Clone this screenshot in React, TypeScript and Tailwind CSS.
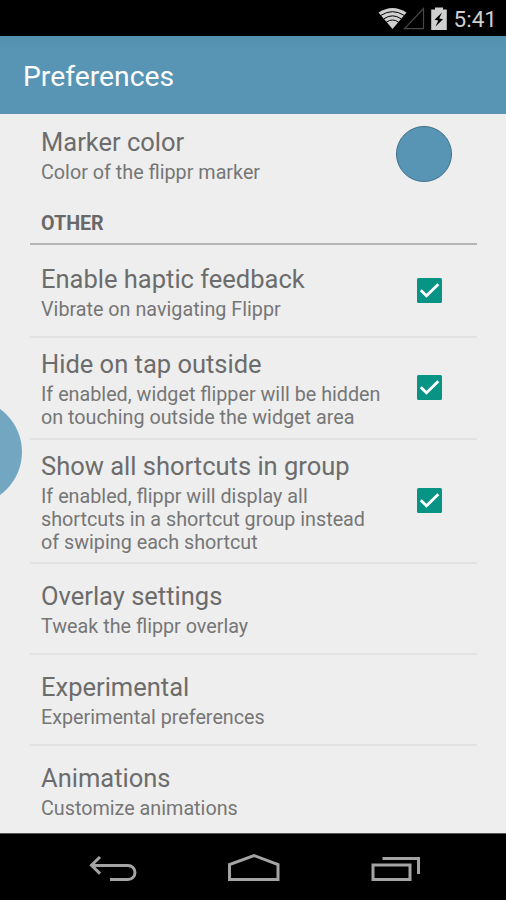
import clsx from "clsx";

type Pref = {
  title: string;
  summary: string[];
  checked?: boolean;
  size: string;
};

const PREFS: Pref[] = [
  { title: "Enable haptic feedback", summary: ["Vibrate on navigating Flippr"], checked: true, size: "h-[93px] pt-[20px]" },
  {
    title: "Hide on tap outside",
    summary: ["If enabled, widget flipper will be hidden", "on touching outside the widget area"],
    checked: true,
    size: "h-[102px] pt-[12px]",
  },
  {
    title: "Show all shortcuts in group",
    summary: ["If enabled, flippr will display all", "shortcuts in a shortcut group instead", "of swiping each shortcut"],
    checked: true,
    size: "h-[124px] pt-[12px]",
  },
  { title: "Overlay settings", summary: ["Tweak the flippr overlay"], size: "h-[91px] pt-[18px]" },
  { title: "Experimental", summary: ["Experimental preferences"], size: "h-[91px] pt-[18px]" },
  { title: "Animations", summary: ["Customize animations"], size: "h-[87px] pt-[18px]" },
];

function StatusBar() {
  return (
    <div className="flex h-9 shrink-0 items-center justify-end bg-black pr-[9px] text-[#cfcfcf]">
      <svg className="h-9 w-[76px]" viewBox="0 0 76 36">
        {/* wifi */}
        <path d="M2.500 12.500Q16.500 3.500 30.500 12.500L16.500 29Z" fill="#cfcfcf" />
        <g fill="none" stroke="#000" strokeWidth="1">
          <path d="M5 15.300Q16.500 8 28 15.300" />
          <path d="M8 18.700Q16.500 13 25 18.700" />
          <path d="M10.500 22Q16.500 18 22.500 22" />
        </g>
        {/* no signal */}
        <path d="M47.500 8.500V28.700H28.500Z" fill="none" stroke="#484848" strokeWidth="1.200" />
        {/* charging battery */}
        <path d="M59 7.500H67V9.500H70.800V30H55.200V9.500H59Z" fill="#cfcfcf" />
        <path d="M66 12.500L58.500 19.800L62.300 20.500L59.500 26.500L67 19.200L63.200 18.500Z" fill="#000" />
      </svg>
      <span className="pl-[2px] pt-[2px] text-[22.500px] leading-9">5:41</span>
    </div>
  );
}

function Labels({ title, summary }: { title: string; summary: string[] }) {
  return (
    <div className="flex-1 text-[#6c6c6c]">
      <div className="text-[25.500px] leading-[28px] whitespace-nowrap">{title}</div>
      <div className="mt-[5px] text-[19.750px] leading-[23px] whitespace-nowrap text-[#767676]">
        {summary.map((line) => (
          <div key={line}>{line}</div>
        ))}
      </div>
    </div>
  );
}

function Check() {
  return (
    <svg className="mr-[35px] h-[25px] w-[25px] self-center" viewBox="0 0 25 25">
      <rect width="25" height="25" rx="1.500" fill="#079485" />
      <path d="M3.800 12.300L9.500 17.800L21.300 6.300" fill="none" stroke="#fff" strokeWidth="2.800" />
    </svg>
  );
}

function NavBar() {
  return (
    <div className="flex h-[67px] shrink-0 justify-center border-t border-[#555] bg-black">
      <svg className="h-[66px] w-[506px]" viewBox="0 834 506 66" fill="none" stroke="#a4a4a4" strokeWidth="3">
        {/* back */}
        <path d="M100 857L91.500 865.300L100 873.600M92 865.500H128A6.800 6.800 0 0 1 128 879.500H110" />
        {/* home */}
        <path d="M229.500 879.500V864.500L254 855.500L278 864.500V879.500Z" />
        {/* recents */}
        <path d="M373 865H410V879.500H373ZM382.500 858.500H418.500V874" />
      </svg>
    </div>
  );
}

export default function App() {
  return (
    <div className="relative flex h-[900px] w-[506px] flex-col overflow-hidden bg-[#eeeeee] font-[Roboto,sans-serif]">
      <StatusBar />
      <header className="flex h-[78px] shrink-0 items-center bg-linear-to-b from-[#5490af] to-[#5895b4] to-20% pl-[23px] pt-[5px] text-[28.300px] text-white">
        Preferences
      </header>

      <main className="flex h-[719px] flex-col pr-[29px] pl-[30px]">
        <div className="flex h-[91px] shrink-0 pt-[14px] pl-[11px]">
          <Labels title="Marker color" summary={["Color of the flippr marker"]} />
          <div className="mt-[-2px] mr-[25px] h-[56px] w-[56px] rounded-full border border-[#3f7188] bg-[#5895b4]" />
        </div>
        <h2 className="h-[40px] shrink-0 border-b-2 border-[#b5b5b5] pt-[8px] pl-[11px] text-[19.700px] leading-[22px] font-bold text-[#686868]">
          OTHER
        </h2>
        {PREFS.map((p, i) => (
          <div
            key={p.title}
            className={clsx("flex shrink-0 pl-[11px]", p.size, i < PREFS.length - 1 && "border-b-2 border-[#e2e2e2]")}
          >
            <Labels title={p.title} summary={p.summary} />
            {p.checked && (
              <div className={clsx("flex", i === 0 ? "-mt-[20px]" : "-mt-[14px]")}>
                <Check />
              </div>
            )}
          </div>
        ))}
      </main>

      <NavBar />

      {/* edge marker, mostly off screen */}
      <div className="absolute top-[399px] left-[-84px] h-[106px] w-[106px] rounded-full bg-[#73a7c1]" />
    </div>
  );
}
